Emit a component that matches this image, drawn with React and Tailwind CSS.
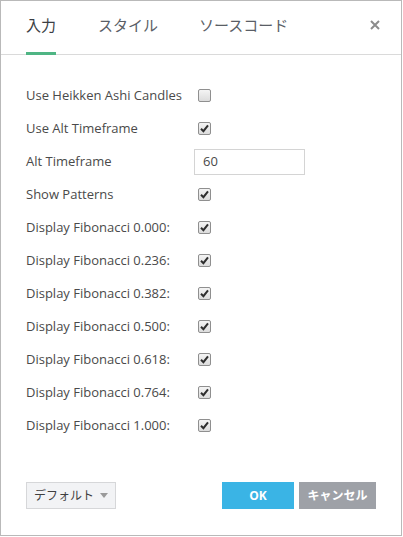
const rows = [
  { label: "Use Heikken Ashi Candles", type: "check", checked: false },
  { label: "Use Alt Timeframe", type: "check", checked: true },
  { label: "Alt Timeframe", type: "input", value: "60" },
  { label: "Show Patterns", type: "check", checked: true },
  { label: "Display Fibonacci 0.000:", type: "check", checked: true },
  { label: "Display Fibonacci 0.236:", type: "check", checked: true },
  { label: "Display Fibonacci 0.382:", type: "check", checked: true },
  { label: "Display Fibonacci 0.500:", type: "check", checked: true },
  { label: "Display Fibonacci 0.618:", type: "check", checked: true },
  { label: "Display Fibonacci 0.764:", type: "check", checked: true },
  { label: "Display Fibonacci 1.000:", type: "check", checked: true },
]

const Check = ({ checked }) => (
  <div className="w-[13px] h-[13px] rounded-[2px] border border-[#8f8f8f] bg-gradient-to-b from-[#f4f4f4] to-[#dcdcdc] flex items-center justify-center">
    {checked && (
      <svg width="9" height="9" viewBox="0 0 9 9">
        <path d="M1 4.8 L3.4 7.2 L8 1.4" fill="none" stroke="#2e2e2e" strokeWidth="2" />
      </svg>
    )}
  </div>
)

const App = () => {
  return (
    <div className="w-[403px] h-[537px] bg-white" style={{ fontFamily: "'Open Sans', 'Noto Sans CJK JP', sans-serif" }}>
      <div className="w-[402px] h-[536px] border border-[#b9b9b9] flex flex-col">
        <div className="h-[54px] border-b border-[#dadada] flex items-end pl-[25px] pr-[20px] relative">
          <div className="flex gap-[42px] text-[15px] text-[#5a5e66]">
            <div className="pb-[16px] border-b-[3px] border-[#4fb584] text-[#3b3e44] -mb-px">入力</div>
            <div className="pb-[16px]">スタイル</div>
            <div className="pb-[16px] -ml-[1px]">ソースコード</div>
          </div>
          <svg className="absolute right-[21px] top-[19px]" width="10" height="10" viewBox="0 0 10 10">
            <path d="M1 1 L9 9 M9 1 L1 9" stroke="#8c8c8c" strokeWidth="2" />
          </svg>
        </div>

        <div className="flex flex-col pt-[24px] pl-[25px]">
          {rows.map((r) => (
            <div key={r.label} className="h-[33px] flex items-center text-[13px] text-[#4a4a4a]">
              <div className="w-[172px]">{r.label}</div>
              {r.type === "check" ? (
                <Check checked={r.checked} />
              ) : (
                <div className="-ml-[4px] w-[111px] h-[26px] border border-[#d4d4d4] flex items-center px-[8px]">{r.value}</div>
              )}
            </div>
          ))}
        </div>

        <div className="mt-auto mb-[26px] px-[25px] flex items-center">
          <div className="h-[27px] w-[90px] bg-[#f2f3f5] border border-[#d6d7d9] flex items-center justify-center gap-[6px] text-[12px] text-[#3f3f3f]">
            デフォルト
            <svg width="8" height="5" viewBox="0 0 8 5">
              <path d="M0 0 L8 0 L4 5 Z" fill="#9a9a9a" />
            </svg>
          </div>
          <div className="ml-auto flex gap-[5px] text-[12px] font-bold text-white">
            <div className="h-[27px] w-[72px] bg-[#3ab4e5] flex items-center justify-center">OK</div>
            <div className="h-[27px] w-[77px] bg-[#9ea1a7] flex items-center justify-center">キャンセル</div>
          </div>
        </div>
      </div>
    </div>
  )
}

export default App
